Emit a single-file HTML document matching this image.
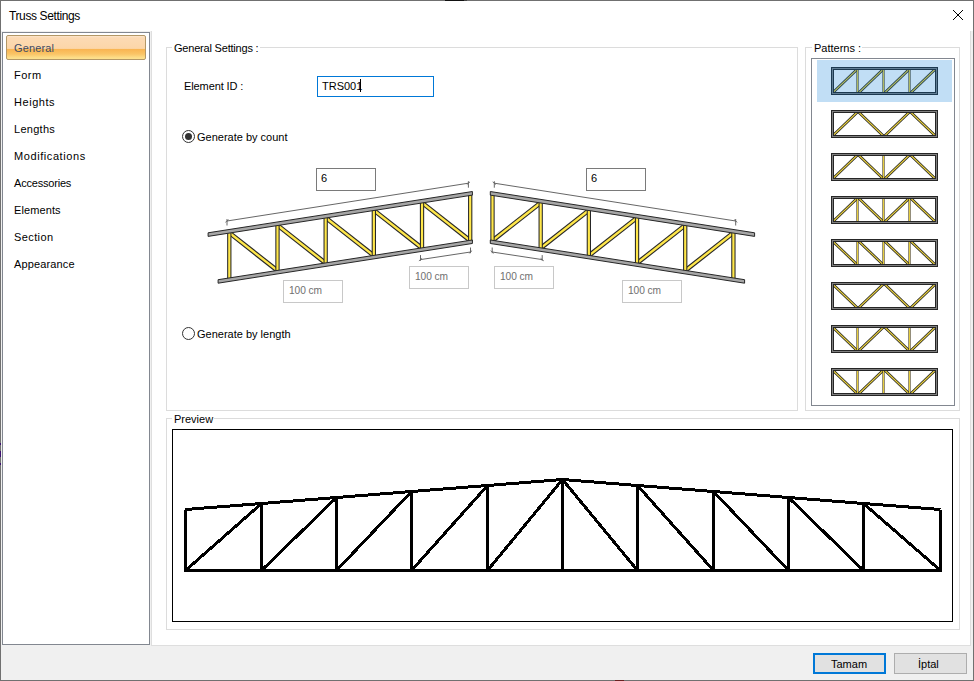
<!DOCTYPE html>
<html><head><meta charset="utf-8"><title>Truss Settings</title><style>
*{margin:0;padding:0;box-sizing:border-box}
html,body{width:974px;height:681px;overflow:hidden;background:#fff;font-family:"Liberation Sans",sans-serif}
.t{position:absolute;white-space:pre;line-height:20px}
.b{position:absolute}
svg{position:absolute;left:0;top:0}
</style></head>
<body>
<div class="b" style="left:0px;top:0px;width:974px;height:681px;border:1px solid #707070;background:#fff"></div>
<div class="b" style="left:445px;top:0px;width:19px;height:1px;background:#111"></div>
<div class="b" style="left:464px;top:0px;width:3px;height:1px;background:#444"></div>
<div class="b" style="left:0px;top:443px;width:1px;height:2px;background:#3b0f6e"></div>
<div class="b" style="left:0px;top:451px;width:1px;height:6px;background:#3b0f6e"></div>
<div class="b" style="left:0px;top:463px;width:1px;height:2px;background:#3b0f6e"></div>
<div class="b" style="left:615px;top:680px;width:9px;height:1px;background:#6a2020"></div>
<div class="b" style="left:1px;top:31px;width:972px;height:649px;background:#f0f0f0"></div>
<div class="t" style="left:9px;top:6px;font-size:12px;color:#000;letter-spacing:-0.38px">Truss Settings</div>
<div class="b" style="left:2px;top:32px;width:148px;height:613px;border:1px solid #828790;background:#fff"></div>
<div class="b" style="left:6px;top:35px;width:140px;height:25px;border:1px solid #b39766;border-radius:2px;background:linear-gradient(#fde6cc 0%,#fcdab4 8%,#fcd6a8 54%,#f9b552 58%,#fac466 78%,#fde08c 96%)"></div>
<div class="t" style="left:14px;top:38px;font-size:11px;color:#3c4a64;letter-spacing:0.13px">General</div>
<div class="t" style="left:14px;top:65px;font-size:11px;color:#000;letter-spacing:0.5px">Form</div>
<div class="t" style="left:14px;top:92px;font-size:11px;color:#000;letter-spacing:0.55px">Heights</div>
<div class="t" style="left:14px;top:119px;font-size:11px;color:#000;letter-spacing:0.27px">Lengths</div>
<div class="t" style="left:14px;top:146px;font-size:11px;color:#000;letter-spacing:0.58px">Modifications</div>
<div class="t" style="left:14px;top:173px;font-size:11px;color:#000;letter-spacing:-0.2px">Accessories</div>
<div class="t" style="left:14px;top:200px;font-size:11px;color:#000;letter-spacing:0.1px">Elements</div>
<div class="t" style="left:14px;top:227px;font-size:11px;color:#000;letter-spacing:0.4px">Section</div>
<div class="t" style="left:14px;top:254px;font-size:11px;color:#000;letter-spacing:0.13px">Appearance</div>
<div class="b" style="left:151px;top:31px;width:820px;height:615px;border:1px solid #dedede;border-top:none;background:#fff"></div>
<div class="b" style="left:166px;top:47px;width:632px;height:364px;border:1px solid #dcdcdc"></div>
<div class="b" style="left:172px;top:45px;width:88px;height:5px;background:#fff"></div>
<div class="t" style="left:174px;top:38px;font-size:11px;color:#000;letter-spacing:-0.2px">General Settings :</div>
<div class="b" style="left:805px;top:47px;width:155px;height:364px;border:1px solid #dcdcdc"></div>
<div class="b" style="left:812px;top:45px;width:50px;height:5px;background:#fff"></div>
<div class="t" style="left:814px;top:38px;font-size:11px;color:#000;letter-spacing:0px">Patterns :</div>
<div class="b" style="left:166px;top:418px;width:794px;height:212px;border:1px solid #dcdcdc"></div>
<div class="b" style="left:172px;top:416px;width:42px;height:5px;background:#fff"></div>
<div class="t" style="left:174px;top:409px;font-size:11px;color:#000;letter-spacing:0px">Preview</div>
<div class="t" style="left:184px;top:76px;font-size:11px;color:#000;letter-spacing:-0.1px">Element ID :</div>
<div class="b" style="left:317px;top:76px;width:117px;height:21px;border:1px solid #0078d7;background:#fff"></div>
<div class="t" style="left:322px;top:76px;font-size:11px;color:#000;">TRS001</div>
<div class="b" style="left:360px;top:79px;width:1px;height:13px;background:#000"></div>
<div class="b" style="left:182px;top:130px;width:13px;height:13px;border:1px solid #333;border-radius:50%;background:#fff"></div>
<div class="b" style="left:185px;top:133px;width:7px;height:7px;border-radius:50%;background:#333"></div>
<div class="t" style="left:197px;top:127px;font-size:11px;color:#000;">Generate by count</div>
<div class="b" style="left:182px;top:327px;width:13px;height:13px;border:1px solid #333;border-radius:50%;background:#fff"></div>
<div class="t" style="left:197px;top:324px;font-size:11px;color:#000;">Generate by length</div>
<div class="b" style="left:316px;top:168px;width:60px;height:23px;border:1px solid #7a7a7a;background:#fff"></div>
<div class="t" style="left:321px;top:168px;font-size:11px;color:#000;">6</div>
<div class="b" style="left:586px;top:168px;width:60px;height:23px;border:1px solid #7a7a7a;background:#fff"></div>
<div class="t" style="left:591px;top:168px;font-size:11px;color:#000;">6</div>
<div class="b" style="left:283px;top:280px;width:60px;height:23px;border:1px solid #c8c8c8;background:#fff"></div>
<div class="t" style="left:289px;top:281px;font-size:10.2px;color:#707070;letter-spacing:-0.1px">100 cm</div>
<div class="b" style="left:409px;top:266px;width:60px;height:23px;border:1px solid #c8c8c8;background:#fff"></div>
<div class="t" style="left:415px;top:267px;font-size:10.2px;color:#707070;letter-spacing:-0.1px">100 cm</div>
<div class="b" style="left:494px;top:266px;width:60px;height:23px;border:1px solid #c8c8c8;background:#fff"></div>
<div class="t" style="left:500px;top:267px;font-size:10.2px;color:#707070;letter-spacing:-0.1px">100 cm</div>
<div class="b" style="left:622px;top:280px;width:60px;height:23px;border:1px solid #c8c8c8;background:#fff"></div>
<div class="t" style="left:628px;top:281px;font-size:10.2px;color:#707070;letter-spacing:-0.1px">100 cm</div>
<div class="b" style="left:172px;top:429px;width:781px;height:193px;border:1px solid #000;background:#fff"></div>
<div class="b" style="left:813px;top:653px;width:73px;height:21px;border:2px solid #0078d7;background:#e1e1e1"></div>
<div class="t" style="left:831px;top:654px;font-size:11px;color:#000;">Tamam</div>
<div class="b" style="left:894px;top:653px;width:73px;height:21px;border:1px solid #adadad;background:#e1e1e1"></div>
<div class="t" style="left:918px;top:654px;font-size:11px;color:#000;">İptal</div>

<svg width="974" height="681" viewBox="0 0 974 681">
<g fill="#000" shape-rendering="crispEdges"><rect x="953" y="10" width="1" height="1"/><rect x="962" y="10" width="1" height="1"/><rect x="954" y="11" width="1" height="1"/><rect x="961" y="11" width="1" height="1"/><rect x="955" y="12" width="1" height="1"/><rect x="960" y="12" width="1" height="1"/><rect x="956" y="13" width="1" height="1"/><rect x="959" y="13" width="1" height="1"/><rect x="957" y="14" width="1" height="1"/><rect x="958" y="14" width="1" height="1"/><rect x="958" y="15" width="1" height="1"/><rect x="957" y="15" width="1" height="1"/><rect x="959" y="16" width="1" height="1"/><rect x="956" y="16" width="1" height="1"/><rect x="960" y="17" width="1" height="1"/><rect x="955" y="17" width="1" height="1"/><rect x="961" y="18" width="1" height="1"/><rect x="954" y="18" width="1" height="1"/><rect x="962" y="19" width="1" height="1"/><rect x="953" y="19" width="1" height="1"/></g><line x1="229.30" y1="232.79" x2="277.48" y2="270.67" stroke="#262626" stroke-width="4.6"/><line x1="229.30" y1="232.79" x2="277.48" y2="270.67" stroke="#ffe74a" stroke-width="2.4"/><line x1="277.48" y1="225.26" x2="325.66" y2="263.15" stroke="#262626" stroke-width="4.6"/><line x1="277.48" y1="225.26" x2="325.66" y2="263.15" stroke="#ffe74a" stroke-width="2.4"/><line x1="325.66" y1="217.74" x2="373.84" y2="255.62" stroke="#262626" stroke-width="4.6"/><line x1="325.66" y1="217.74" x2="373.84" y2="255.62" stroke="#ffe74a" stroke-width="2.4"/><line x1="373.84" y1="210.21" x2="422.02" y2="248.10" stroke="#262626" stroke-width="4.6"/><line x1="373.84" y1="210.21" x2="422.02" y2="248.10" stroke="#ffe74a" stroke-width="2.4"/><line x1="422.02" y1="202.69" x2="470.20" y2="240.57" stroke="#262626" stroke-width="4.6"/><line x1="422.02" y1="202.69" x2="470.20" y2="240.57" stroke="#ffe74a" stroke-width="2.4"/><line x1="229.30" y1="231.29" x2="229.30" y2="279.70" stroke="#262626" stroke-width="4.3"/><line x1="229.30" y1="231.29" x2="229.30" y2="279.70" stroke="#ffe74a" stroke-width="2.2"/><line x1="277.48" y1="223.76" x2="277.48" y2="272.17" stroke="#262626" stroke-width="4.3"/><line x1="277.48" y1="223.76" x2="277.48" y2="272.17" stroke="#ffe74a" stroke-width="2.2"/><line x1="325.66" y1="216.24" x2="325.66" y2="264.65" stroke="#262626" stroke-width="4.3"/><line x1="325.66" y1="216.24" x2="325.66" y2="264.65" stroke="#ffe74a" stroke-width="2.2"/><line x1="373.84" y1="208.71" x2="373.84" y2="257.12" stroke="#262626" stroke-width="4.3"/><line x1="373.84" y1="208.71" x2="373.84" y2="257.12" stroke="#ffe74a" stroke-width="2.2"/><line x1="422.02" y1="201.19" x2="422.02" y2="249.60" stroke="#262626" stroke-width="4.3"/><line x1="422.02" y1="201.19" x2="422.02" y2="249.60" stroke="#ffe74a" stroke-width="2.2"/><line x1="470.20" y1="193.66" x2="470.20" y2="242.07" stroke="#262626" stroke-width="4.3"/><line x1="470.20" y1="193.66" x2="470.20" y2="242.07" stroke="#ffe74a" stroke-width="2.2"/><polygon points="208.10,232.80 472.40,191.52 472.40,195.12 208.10,236.40" fill="#a6a6a6" stroke="#262626" stroke-width="1"/><polygon points="218.10,279.70 472.40,239.98 472.40,243.48 218.10,283.20" fill="#a6a6a6" stroke="#262626" stroke-width="1"/><line x1="227.00" y1="221.00" x2="468.40" y2="183.20" stroke="#555" stroke-width="0.9"/><line x1="227.00" y1="219.00" x2="227.00" y2="225.50" stroke="#555" stroke-width="0.9"/><line x1="225.40" y1="222.30" x2="228.60" y2="219.70" stroke="#666" stroke-width="0.9"/><line x1="468.40" y1="181.20" x2="468.40" y2="187.70" stroke="#555" stroke-width="0.9"/><line x1="466.80" y1="184.50" x2="470.00" y2="181.90" stroke="#666" stroke-width="0.9"/><line x1="420.50" y1="259.60" x2="470.50" y2="252.00" stroke="#555" stroke-width="0.9"/><line x1="420.50" y1="255.10" x2="420.50" y2="260.80" stroke="#555" stroke-width="0.9"/><line x1="418.90" y1="260.90" x2="422.10" y2="258.30" stroke="#666" stroke-width="0.9"/><line x1="470.50" y1="247.50" x2="470.50" y2="253.20" stroke="#555" stroke-width="0.9"/><line x1="468.90" y1="253.30" x2="472.10" y2="250.70" stroke="#666" stroke-width="0.9"/><line x1="733.40" y1="232.79" x2="685.22" y2="270.67" stroke="#262626" stroke-width="4.6"/><line x1="733.40" y1="232.79" x2="685.22" y2="270.67" stroke="#ffe74a" stroke-width="2.4"/><line x1="685.22" y1="225.26" x2="637.04" y2="263.15" stroke="#262626" stroke-width="4.6"/><line x1="685.22" y1="225.26" x2="637.04" y2="263.15" stroke="#ffe74a" stroke-width="2.4"/><line x1="637.04" y1="217.74" x2="588.86" y2="255.62" stroke="#262626" stroke-width="4.6"/><line x1="637.04" y1="217.74" x2="588.86" y2="255.62" stroke="#ffe74a" stroke-width="2.4"/><line x1="588.86" y1="210.21" x2="540.68" y2="248.10" stroke="#262626" stroke-width="4.6"/><line x1="588.86" y1="210.21" x2="540.68" y2="248.10" stroke="#ffe74a" stroke-width="2.4"/><line x1="540.68" y1="202.69" x2="492.50" y2="240.57" stroke="#262626" stroke-width="4.6"/><line x1="540.68" y1="202.69" x2="492.50" y2="240.57" stroke="#ffe74a" stroke-width="2.4"/><line x1="733.40" y1="231.29" x2="733.40" y2="279.70" stroke="#262626" stroke-width="4.3"/><line x1="733.40" y1="231.29" x2="733.40" y2="279.70" stroke="#ffe74a" stroke-width="2.2"/><line x1="685.22" y1="223.76" x2="685.22" y2="272.17" stroke="#262626" stroke-width="4.3"/><line x1="685.22" y1="223.76" x2="685.22" y2="272.17" stroke="#ffe74a" stroke-width="2.2"/><line x1="637.04" y1="216.24" x2="637.04" y2="264.65" stroke="#262626" stroke-width="4.3"/><line x1="637.04" y1="216.24" x2="637.04" y2="264.65" stroke="#ffe74a" stroke-width="2.2"/><line x1="588.86" y1="208.71" x2="588.86" y2="257.12" stroke="#262626" stroke-width="4.3"/><line x1="588.86" y1="208.71" x2="588.86" y2="257.12" stroke="#ffe74a" stroke-width="2.2"/><line x1="540.68" y1="201.19" x2="540.68" y2="249.60" stroke="#262626" stroke-width="4.3"/><line x1="540.68" y1="201.19" x2="540.68" y2="249.60" stroke="#ffe74a" stroke-width="2.2"/><line x1="492.50" y1="193.66" x2="492.50" y2="242.07" stroke="#262626" stroke-width="4.3"/><line x1="492.50" y1="193.66" x2="492.50" y2="242.07" stroke="#ffe74a" stroke-width="2.2"/><polygon points="754.60,232.80 490.30,191.52 490.30,195.12 754.60,236.40" fill="#a6a6a6" stroke="#262626" stroke-width="1"/><polygon points="744.60,279.70 490.30,239.98 490.30,243.48 744.60,283.20" fill="#a6a6a6" stroke="#262626" stroke-width="1"/><line x1="735.70" y1="221.00" x2="494.30" y2="183.20" stroke="#555" stroke-width="0.9"/><line x1="735.70" y1="219.00" x2="735.70" y2="225.50" stroke="#555" stroke-width="0.9"/><line x1="737.30" y1="222.30" x2="734.10" y2="219.70" stroke="#666" stroke-width="0.9"/><line x1="494.30" y1="181.20" x2="494.30" y2="187.70" stroke="#555" stroke-width="0.9"/><line x1="495.90" y1="184.50" x2="492.70" y2="181.90" stroke="#666" stroke-width="0.9"/><line x1="542.20" y1="259.60" x2="492.20" y2="252.00" stroke="#555" stroke-width="0.9"/><line x1="542.20" y1="255.10" x2="542.20" y2="260.80" stroke="#555" stroke-width="0.9"/><line x1="543.80" y1="260.90" x2="540.60" y2="258.30" stroke="#666" stroke-width="0.9"/><line x1="492.20" y1="247.50" x2="492.20" y2="253.20" stroke="#555" stroke-width="0.9"/><line x1="493.80" y1="253.30" x2="490.60" y2="250.70" stroke="#666" stroke-width="0.9"/>
</svg>
<div class="b" style="left:811px;top:58px;width:144px;height:348px;border:1px solid #828790;background:#fff"></div>
<svg width="974" height="681" viewBox="0 0 974 681">
<line x1="832.00" y1="93.50" x2="858.00" y2="68.50" stroke="#1a1a1a" stroke-width="2.7"/><line x1="832.00" y1="93.50" x2="858.00" y2="68.50" stroke="#e6ce40" stroke-width="1.2"/><line x1="858.00" y1="93.50" x2="884.00" y2="68.50" stroke="#1a1a1a" stroke-width="2.7"/><line x1="858.00" y1="93.50" x2="884.00" y2="68.50" stroke="#e6ce40" stroke-width="1.2"/><line x1="884.00" y1="93.50" x2="910.00" y2="68.50" stroke="#1a1a1a" stroke-width="2.7"/><line x1="884.00" y1="93.50" x2="910.00" y2="68.50" stroke="#e6ce40" stroke-width="1.2"/><line x1="910.00" y1="93.50" x2="936.00" y2="68.50" stroke="#1a1a1a" stroke-width="2.7"/><line x1="910.00" y1="93.50" x2="936.00" y2="68.50" stroke="#e6ce40" stroke-width="1.2"/><line x1="857.50" y1="68.50" x2="857.50" y2="93.50" stroke="#4a4020" stroke-width="2.2"/><line x1="857.50" y1="68.50" x2="857.50" y2="93.50" stroke="#e6ce40" stroke-width="1.0"/><line x1="883.50" y1="68.50" x2="883.50" y2="93.50" stroke="#4a4020" stroke-width="2.2"/><line x1="883.50" y1="68.50" x2="883.50" y2="93.50" stroke="#e6ce40" stroke-width="1.0"/><line x1="909.50" y1="68.50" x2="909.50" y2="93.50" stroke="#4a4020" stroke-width="2.2"/><line x1="909.50" y1="68.50" x2="909.50" y2="93.50" stroke="#e6ce40" stroke-width="1.0"/><rect x="832.5" y="68.5" width="104" height="25" fill="none" stroke="#808080" stroke-width="3"/><rect x="831.5" y="67.5" width="106" height="27" fill="none" stroke="#262626" stroke-width="1"/><rect x="833.5" y="69.5" width="102" height="23" fill="none" stroke="#262626" stroke-width="1"/><line x1="832.00" y1="136.50" x2="858.00" y2="111.50" stroke="#1a1a1a" stroke-width="2.7"/><line x1="832.00" y1="136.50" x2="858.00" y2="111.50" stroke="#e6ce40" stroke-width="1.2"/><line x1="858.00" y1="111.50" x2="884.00" y2="136.50" stroke="#1a1a1a" stroke-width="2.7"/><line x1="858.00" y1="111.50" x2="884.00" y2="136.50" stroke="#e6ce40" stroke-width="1.2"/><line x1="884.00" y1="136.50" x2="910.00" y2="111.50" stroke="#1a1a1a" stroke-width="2.7"/><line x1="884.00" y1="136.50" x2="910.00" y2="111.50" stroke="#e6ce40" stroke-width="1.2"/><line x1="910.00" y1="111.50" x2="936.00" y2="136.50" stroke="#1a1a1a" stroke-width="2.7"/><line x1="910.00" y1="111.50" x2="936.00" y2="136.50" stroke="#e6ce40" stroke-width="1.2"/><rect x="832.5" y="111.5" width="104" height="25" fill="none" stroke="#808080" stroke-width="3"/><rect x="831.5" y="110.5" width="106" height="27" fill="none" stroke="#262626" stroke-width="1"/><rect x="833.5" y="112.5" width="102" height="23" fill="none" stroke="#262626" stroke-width="1"/><line x1="832.00" y1="179.50" x2="858.00" y2="154.50" stroke="#1a1a1a" stroke-width="2.7"/><line x1="832.00" y1="179.50" x2="858.00" y2="154.50" stroke="#e6ce40" stroke-width="1.2"/><line x1="858.00" y1="154.50" x2="884.00" y2="179.50" stroke="#1a1a1a" stroke-width="2.7"/><line x1="858.00" y1="154.50" x2="884.00" y2="179.50" stroke="#e6ce40" stroke-width="1.2"/><line x1="884.00" y1="179.50" x2="910.00" y2="154.50" stroke="#1a1a1a" stroke-width="2.7"/><line x1="884.00" y1="179.50" x2="910.00" y2="154.50" stroke="#e6ce40" stroke-width="1.2"/><line x1="910.00" y1="154.50" x2="936.00" y2="179.50" stroke="#1a1a1a" stroke-width="2.7"/><line x1="910.00" y1="154.50" x2="936.00" y2="179.50" stroke="#e6ce40" stroke-width="1.2"/><line x1="883.50" y1="154.50" x2="883.50" y2="179.50" stroke="#4a4020" stroke-width="2.2"/><line x1="883.50" y1="154.50" x2="883.50" y2="179.50" stroke="#e6ce40" stroke-width="1.0"/><rect x="832.5" y="154.5" width="104" height="25" fill="none" stroke="#808080" stroke-width="3"/><rect x="831.5" y="153.5" width="106" height="27" fill="none" stroke="#262626" stroke-width="1"/><rect x="833.5" y="155.5" width="102" height="23" fill="none" stroke="#262626" stroke-width="1"/><line x1="832.00" y1="222.50" x2="858.00" y2="197.50" stroke="#1a1a1a" stroke-width="2.7"/><line x1="832.00" y1="222.50" x2="858.00" y2="197.50" stroke="#e6ce40" stroke-width="1.2"/><line x1="858.00" y1="197.50" x2="884.00" y2="222.50" stroke="#1a1a1a" stroke-width="2.7"/><line x1="858.00" y1="197.50" x2="884.00" y2="222.50" stroke="#e6ce40" stroke-width="1.2"/><line x1="884.00" y1="222.50" x2="910.00" y2="197.50" stroke="#1a1a1a" stroke-width="2.7"/><line x1="884.00" y1="222.50" x2="910.00" y2="197.50" stroke="#e6ce40" stroke-width="1.2"/><line x1="910.00" y1="197.50" x2="936.00" y2="222.50" stroke="#1a1a1a" stroke-width="2.7"/><line x1="910.00" y1="197.50" x2="936.00" y2="222.50" stroke="#e6ce40" stroke-width="1.2"/><line x1="857.50" y1="197.50" x2="857.50" y2="222.50" stroke="#4a4020" stroke-width="2.2"/><line x1="857.50" y1="197.50" x2="857.50" y2="222.50" stroke="#e6ce40" stroke-width="1.0"/><line x1="883.50" y1="197.50" x2="883.50" y2="222.50" stroke="#4a4020" stroke-width="2.2"/><line x1="883.50" y1="197.50" x2="883.50" y2="222.50" stroke="#e6ce40" stroke-width="1.0"/><line x1="909.50" y1="197.50" x2="909.50" y2="222.50" stroke="#4a4020" stroke-width="2.2"/><line x1="909.50" y1="197.50" x2="909.50" y2="222.50" stroke="#e6ce40" stroke-width="1.0"/><rect x="832.5" y="197.5" width="104" height="25" fill="none" stroke="#808080" stroke-width="3"/><rect x="831.5" y="196.5" width="106" height="27" fill="none" stroke="#262626" stroke-width="1"/><rect x="833.5" y="198.5" width="102" height="23" fill="none" stroke="#262626" stroke-width="1"/><line x1="832.00" y1="240.50" x2="858.00" y2="265.50" stroke="#1a1a1a" stroke-width="2.7"/><line x1="832.00" y1="240.50" x2="858.00" y2="265.50" stroke="#e6ce40" stroke-width="1.2"/><line x1="858.00" y1="240.50" x2="884.00" y2="265.50" stroke="#1a1a1a" stroke-width="2.7"/><line x1="858.00" y1="240.50" x2="884.00" y2="265.50" stroke="#e6ce40" stroke-width="1.2"/><line x1="884.00" y1="240.50" x2="910.00" y2="265.50" stroke="#1a1a1a" stroke-width="2.7"/><line x1="884.00" y1="240.50" x2="910.00" y2="265.50" stroke="#e6ce40" stroke-width="1.2"/><line x1="910.00" y1="240.50" x2="936.00" y2="265.50" stroke="#1a1a1a" stroke-width="2.7"/><line x1="910.00" y1="240.50" x2="936.00" y2="265.50" stroke="#e6ce40" stroke-width="1.2"/><line x1="857.50" y1="240.50" x2="857.50" y2="265.50" stroke="#4a4020" stroke-width="2.2"/><line x1="857.50" y1="240.50" x2="857.50" y2="265.50" stroke="#e6ce40" stroke-width="1.0"/><line x1="883.50" y1="240.50" x2="883.50" y2="265.50" stroke="#4a4020" stroke-width="2.2"/><line x1="883.50" y1="240.50" x2="883.50" y2="265.50" stroke="#e6ce40" stroke-width="1.0"/><line x1="909.50" y1="240.50" x2="909.50" y2="265.50" stroke="#4a4020" stroke-width="2.2"/><line x1="909.50" y1="240.50" x2="909.50" y2="265.50" stroke="#e6ce40" stroke-width="1.0"/><rect x="832.5" y="240.5" width="104" height="25" fill="none" stroke="#808080" stroke-width="3"/><rect x="831.5" y="239.5" width="106" height="27" fill="none" stroke="#262626" stroke-width="1"/><rect x="833.5" y="241.5" width="102" height="23" fill="none" stroke="#262626" stroke-width="1"/><line x1="832.00" y1="283.50" x2="858.00" y2="308.50" stroke="#1a1a1a" stroke-width="2.7"/><line x1="832.00" y1="283.50" x2="858.00" y2="308.50" stroke="#e6ce40" stroke-width="1.2"/><line x1="858.00" y1="308.50" x2="884.00" y2="283.50" stroke="#1a1a1a" stroke-width="2.7"/><line x1="858.00" y1="308.50" x2="884.00" y2="283.50" stroke="#e6ce40" stroke-width="1.2"/><line x1="884.00" y1="283.50" x2="910.00" y2="308.50" stroke="#1a1a1a" stroke-width="2.7"/><line x1="884.00" y1="283.50" x2="910.00" y2="308.50" stroke="#e6ce40" stroke-width="1.2"/><line x1="910.00" y1="308.50" x2="936.00" y2="283.50" stroke="#1a1a1a" stroke-width="2.7"/><line x1="910.00" y1="308.50" x2="936.00" y2="283.50" stroke="#e6ce40" stroke-width="1.2"/><rect x="832.5" y="283.5" width="104" height="25" fill="none" stroke="#808080" stroke-width="3"/><rect x="831.5" y="282.5" width="106" height="27" fill="none" stroke="#262626" stroke-width="1"/><rect x="833.5" y="284.5" width="102" height="23" fill="none" stroke="#262626" stroke-width="1"/><line x1="832.00" y1="326.50" x2="858.00" y2="351.50" stroke="#1a1a1a" stroke-width="2.7"/><line x1="832.00" y1="326.50" x2="858.00" y2="351.50" stroke="#e6ce40" stroke-width="1.2"/><line x1="858.00" y1="351.50" x2="884.00" y2="326.50" stroke="#1a1a1a" stroke-width="2.7"/><line x1="858.00" y1="351.50" x2="884.00" y2="326.50" stroke="#e6ce40" stroke-width="1.2"/><line x1="884.00" y1="326.50" x2="910.00" y2="351.50" stroke="#1a1a1a" stroke-width="2.7"/><line x1="884.00" y1="326.50" x2="910.00" y2="351.50" stroke="#e6ce40" stroke-width="1.2"/><line x1="910.00" y1="351.50" x2="936.00" y2="326.50" stroke="#1a1a1a" stroke-width="2.7"/><line x1="910.00" y1="351.50" x2="936.00" y2="326.50" stroke="#e6ce40" stroke-width="1.2"/><line x1="857.50" y1="326.50" x2="857.50" y2="351.50" stroke="#4a4020" stroke-width="2.2"/><line x1="857.50" y1="326.50" x2="857.50" y2="351.50" stroke="#e6ce40" stroke-width="1.0"/><line x1="909.50" y1="326.50" x2="909.50" y2="351.50" stroke="#4a4020" stroke-width="2.2"/><line x1="909.50" y1="326.50" x2="909.50" y2="351.50" stroke="#e6ce40" stroke-width="1.0"/><rect x="832.5" y="326.5" width="104" height="25" fill="none" stroke="#808080" stroke-width="3"/><rect x="831.5" y="325.5" width="106" height="27" fill="none" stroke="#262626" stroke-width="1"/><rect x="833.5" y="327.5" width="102" height="23" fill="none" stroke="#262626" stroke-width="1"/><line x1="832.00" y1="369.50" x2="858.00" y2="394.50" stroke="#1a1a1a" stroke-width="2.7"/><line x1="832.00" y1="369.50" x2="858.00" y2="394.50" stroke="#e6ce40" stroke-width="1.2"/><line x1="858.00" y1="394.50" x2="884.00" y2="369.50" stroke="#1a1a1a" stroke-width="2.7"/><line x1="858.00" y1="394.50" x2="884.00" y2="369.50" stroke="#e6ce40" stroke-width="1.2"/><line x1="884.00" y1="369.50" x2="910.00" y2="394.50" stroke="#1a1a1a" stroke-width="2.7"/><line x1="884.00" y1="369.50" x2="910.00" y2="394.50" stroke="#e6ce40" stroke-width="1.2"/><line x1="910.00" y1="394.50" x2="936.00" y2="369.50" stroke="#1a1a1a" stroke-width="2.7"/><line x1="910.00" y1="394.50" x2="936.00" y2="369.50" stroke="#e6ce40" stroke-width="1.2"/><line x1="857.50" y1="369.50" x2="857.50" y2="394.50" stroke="#4a4020" stroke-width="2.2"/><line x1="857.50" y1="369.50" x2="857.50" y2="394.50" stroke="#e6ce40" stroke-width="1.0"/><line x1="883.50" y1="369.50" x2="883.50" y2="394.50" stroke="#4a4020" stroke-width="2.2"/><line x1="883.50" y1="369.50" x2="883.50" y2="394.50" stroke="#e6ce40" stroke-width="1.0"/><line x1="909.50" y1="369.50" x2="909.50" y2="394.50" stroke="#4a4020" stroke-width="2.2"/><line x1="909.50" y1="369.50" x2="909.50" y2="394.50" stroke="#e6ce40" stroke-width="1.0"/><rect x="832.5" y="369.5" width="104" height="25" fill="none" stroke="#808080" stroke-width="3"/><rect x="831.5" y="368.5" width="106" height="27" fill="none" stroke="#262626" stroke-width="1"/><rect x="833.5" y="370.5" width="102" height="23" fill="none" stroke="#262626" stroke-width="1"/>
</svg>
<div class="b" style="left:817px;top:60px;width:135px;height:42px;background:rgba(0,120,215,0.245)"></div>
<svg width="974" height="681" viewBox="0 0 974 681" shape-rendering="crispEdges">
<polyline points="185.5,509.5 261.5,503.5 336.5,497.5 411.5,491.5 487.5,485.5 562.5,479.5 637.5,485.5 713.5,491.5 788.5,497.5 863.5,503.5 940.5,509.5" fill="none" stroke="#000" stroke-width="3"/><line x1="184" y1="570.5" x2="942" y2="570.5" stroke="#000" stroke-width="3"/><line x1="185.5" y1="509.5" x2="185.5" y2="570.5" stroke="#000" stroke-width="3"/><line x1="261.5" y1="503.5" x2="261.5" y2="570.5" stroke="#000" stroke-width="3"/><line x1="336.5" y1="497.5" x2="336.5" y2="570.5" stroke="#000" stroke-width="3"/><line x1="411.5" y1="491.5" x2="411.5" y2="570.5" stroke="#000" stroke-width="3"/><line x1="487.5" y1="485.5" x2="487.5" y2="570.5" stroke="#000" stroke-width="3"/><line x1="562.5" y1="479.5" x2="562.5" y2="570.5" stroke="#000" stroke-width="3"/><line x1="637.5" y1="485.5" x2="637.5" y2="570.5" stroke="#000" stroke-width="3"/><line x1="713.5" y1="491.5" x2="713.5" y2="570.5" stroke="#000" stroke-width="3"/><line x1="788.5" y1="497.5" x2="788.5" y2="570.5" stroke="#000" stroke-width="3"/><line x1="863.5" y1="503.5" x2="863.5" y2="570.5" stroke="#000" stroke-width="3"/><line x1="940.5" y1="509.5" x2="940.5" y2="570.5" stroke="#000" stroke-width="3"/><line x1="185.5" y1="570.5" x2="261.5" y2="503.5" stroke="#000" stroke-width="3"/><line x1="261.5" y1="570.5" x2="336.5" y2="497.5" stroke="#000" stroke-width="3"/><line x1="336.5" y1="570.5" x2="411.5" y2="491.5" stroke="#000" stroke-width="3"/><line x1="411.5" y1="570.5" x2="487.5" y2="485.5" stroke="#000" stroke-width="3"/><line x1="487.5" y1="570.5" x2="562.5" y2="479.5" stroke="#000" stroke-width="3"/><line x1="562.5" y1="479.5" x2="637.5" y2="570.5" stroke="#000" stroke-width="3"/><line x1="637.5" y1="485.5" x2="713.5" y2="570.5" stroke="#000" stroke-width="3"/><line x1="713.5" y1="491.5" x2="788.5" y2="570.5" stroke="#000" stroke-width="3"/><line x1="788.5" y1="497.5" x2="863.5" y2="570.5" stroke="#000" stroke-width="3"/><line x1="863.5" y1="503.5" x2="940.5" y2="570.5" stroke="#000" stroke-width="3"/>
</svg>
</body></html>
